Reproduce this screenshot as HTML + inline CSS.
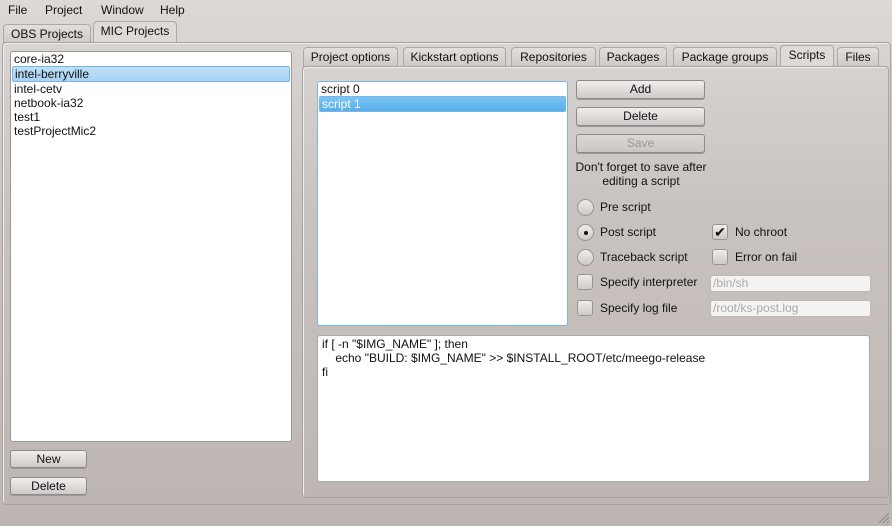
<!DOCTYPE html><html><head><style>
body{margin:0;width:892px;height:526px;overflow:hidden;background:linear-gradient(#dcd9d7,#c9c3c0 40%,#bdb5b1);font-family:"Liberation Sans",sans-serif;font-size:12px;color:#111;position:relative}
.a{position:absolute}
.menu span{position:absolute;top:3px}
.tab{position:absolute;border:1px solid #aaa;border-bottom:none;border-radius:4px 4px 0 0;background:linear-gradient(#e2dfdd,#cdc8c5);text-align:center;line-height:19px;height:19px}
.tab.sel{background:#dedad8;height:21px}
.panel{position:absolute;border:1px solid #a9a3a0;border-radius:4px;box-shadow:inset 1px 1px 0 #eee}
.list{position:absolute;background:#fff;border:1px solid #999;border-radius:3px}
.btn{position:absolute;border:1px solid #8f8a87;border-radius:3px;background:linear-gradient(#f0eeed,#cfcac7);text-align:center;box-shadow:0 1px 0 #999}
.sel2{background:linear-gradient(#bfe0f8,#a8d2f2);border:1px solid #7ab6e3;border-radius:2px}
.rad{position:absolute;width:15px;height:15px;border-radius:50%;border:1px solid #9a9591;background:linear-gradient(#eeeceb,#cfcac7)}
.chk{position:absolute;width:14px;height:14px;border-radius:3px;border:1px solid #9a9591;background:linear-gradient(#eeeceb,#cfcac7)}
.le{position:absolute;background:#f4f3f2;border:1px solid #bbb;border-radius:3px;color:#aaa;padding-left:2px;line-height:15px}
</style></head><body>
<div class="menu"><span style="left:8px">File</span><span style="left:45px">Project</span><span style="left:101px">Window</span><span style="left:160px">Help</span></div>
<div class="tab" style="left:3px;top:24px;width:86px">OBS Projects</div>
<div class="tab sel" style="left:93px;top:21px;width:82px">MIC Projects</div>
<div class="panel" style="left:2px;top:42px;width:887px;height:461px"></div>
<div class="list" style="left:10px;top:51px;width:280px;height:389px;line-height:14px">
<div style="padding-left:3px">core-ia32</div>
<div class="sel2" style="margin:0 1px;padding-left:2px">intel-berryville</div>
<div style="padding-left:3px">intel-cetv</div><div style="padding-left:3px">netbook-ia32</div><div style="padding-left:3px">test1</div><div style="padding-left:3px">testProjectMic2</div></div>
<div class="btn" style="left:10px;top:450px;width:75px;height:16px;line-height:16px">New</div>
<div class="btn" style="left:10px;top:477px;width:75px;height:16px;line-height:16px">Delete</div>
<div class="tab" style="left:303px;top:47px;width:93px">Project options</div>
<div class="tab" style="left:403px;top:47px;width:101px">Kickstart options</div>
<div class="tab" style="left:511px;top:47px;width:83px">Repositories</div>
<div class="tab" style="left:599px;top:47px;width:66px">Packages</div>
<div class="tab" style="left:673px;top:47px;width:102px">Package groups</div>
<div class="tab sel" style="left:780px;top:45px;width:52px">Scripts</div>
<div class="tab" style="left:837px;top:47px;width:40px">Files</div>
<div class="panel" style="left:302px;top:66px;width:585px;height:430px"></div>
<div class="list" style="left:317px;top:81px;width:249px;height:243px;border-color:#7ab6e3;line-height:14px">
<div style="padding-left:3px">script 0</div>
<div class="sel2" style="margin:0 1px;padding-left:2px;color:#fff;background:linear-gradient(#7cc4f4,#56aeea)">script 1</div></div>
<div class="btn" style="left:576px;top:80px;width:127px;height:17px;line-height:17px">Add</div>
<div class="btn" style="left:576px;top:107px;width:127px;height:17px;line-height:17px">Delete</div>
<div class="btn" style="left:576px;top:134px;width:127px;height:17px;line-height:17px;color:#999;background:linear-gradient(#dcd8d6,#cbc6c3)">Save</div>
<div class="a" style="left:570px;top:160px;width:142px;text-align:center;line-height:14px">Don't forget to save after editing a script</div>
<div class="rad" style="left:577px;top:199px"></div><div class="a" style="left:600px;top:200px">Pre script</div>
<div class="rad" style="left:577px;top:224px"><div style="width:4px;height:4px;background:#111;border-radius:50%;margin:5.5px"></div></div><div class="a" style="left:600px;top:225px">Post script</div>
<div class="rad" style="left:577px;top:249px"></div><div class="a" style="left:600px;top:250px">Traceback script</div>
<div class="chk" style="left:577px;top:274px"></div><div class="a" style="left:600px;top:275px">Specify interpreter</div>
<div class="chk" style="left:577px;top:300px"></div><div class="a" style="left:600px;top:301px">Specify log file</div>
<div class="chk" style="left:712px;top:224px;font-size:14px;line-height:14px;text-align:center">✔</div><div class="a" style="left:735px;top:225px">No chroot</div>
<div class="chk" style="left:712px;top:249px"></div><div class="a" style="left:735px;top:250px">Error on fail</div>
<div class="le" style="left:710px;top:275px;width:157px;height:15px">/bin/sh</div>
<div class="le" style="left:710px;top:300px;width:157px;height:15px">/root/ks-post.log</div>
<div class="list" style="left:317px;top:335px;height:147px;border-color:#aaa;padding:1px 0 0 4px;box-sizing:border-box;width:553px;line-height:14px;white-space:pre">if [ -n "$IMG_NAME" ]; then
    echo "BUILD: $IMG_NAME" &gt;&gt; $INSTALL_ROOT/etc/meego-release
fi</div>
<svg class="a" style="left:876px;top:510px" width="14" height="14"><path d="M13 3L3 13M13 7L7 13M13 11L11 13" stroke="#888" stroke-width="1"/></svg>
</body></html>
